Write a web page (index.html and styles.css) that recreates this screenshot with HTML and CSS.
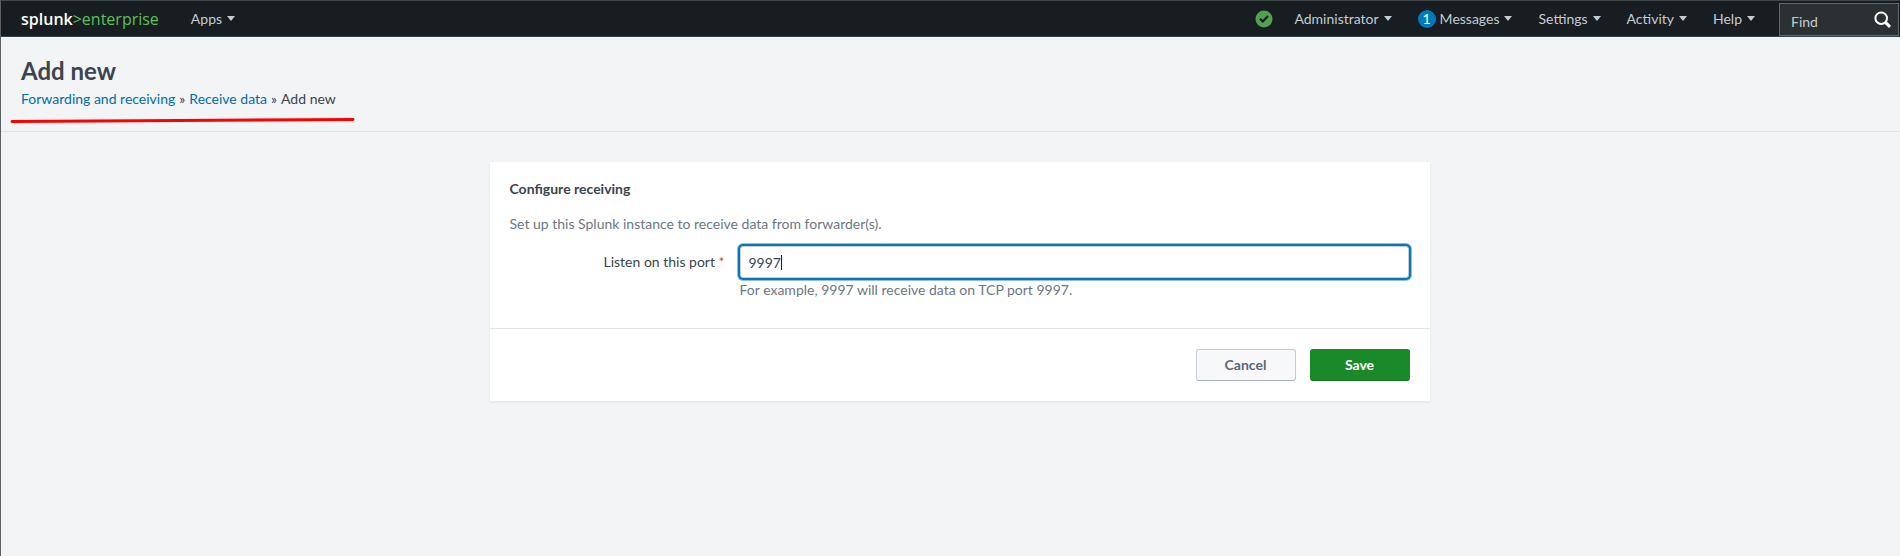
FILE: index.html
```html
<!DOCTYPE html>
<html lang="en">
<head>
<meta charset="utf-8">
<title>Add new</title>
<link rel="stylesheet" href="styles.css">
</head>
<body>
<header class="topbar">
  <a class="brand" href="#"><span class="brand-name">splunk</span><span class="brand-product">&gt;enterprise</span></a>
  <nav class="nav nav-main">
    <button class="nav-item" type="button">Apps<span class="arrow"></span></button>
  </nav>
  <nav class="nav nav-tools">
    <a class="health" href="#" aria-label="Health status">
      <svg width="18" height="18" viewBox="0 0 18 18"><circle cx="9" cy="9" r="8.5" fill="#53a051"/><path d="M5 8.8l2.8 2.6L13 6" fill="none" stroke="#171d21" stroke-width="2.2"/></svg>
    </a>
    <button class="nav-item" type="button">Administrator<span class="arrow"></span></button>
    <button class="nav-item" type="button"><span class="badge">1</span>Messages<span class="arrow"></span></button>
    <button class="nav-item" type="button">Settings<span class="arrow"></span></button>
    <button class="nav-item" type="button">Activity<span class="arrow"></span></button>
    <button class="nav-item" type="button">Help<span class="arrow"></span></button>
  </nav>
  <form class="find">
    <input class="find-input" type="text" placeholder="Find" aria-label="Find">
    <button class="find-button" type="button" aria-label="Search">
      <svg width="18" height="18" viewBox="0 0 18 18" fill="none" stroke="#fff"><circle cx="7.2" cy="7.2" r="5.8" stroke-width="2"/><path d="M11.4 11.4l4.6 4.4" stroke-width="3"/></svg>
    </button>
  </form>
</header>
<section class="page-head">
  <h1 class="title">Add new</h1>
  <div class="crumbs"><a href="#">Forwarding and receiving</a><span class="crumb-mark">»</span><a href="#">Receive data</a><span class="crumb-mark">»</span>Add new</div>
  <svg class="marker" width="348" height="8" viewBox="0 0 348 8"><path d="M3 5.5L170 4.5L344 3.5" fill="none" stroke="#fe0000" stroke-width="3" stroke-linecap="round"/></svg>
</section>
<main class="content">
  <form class="panel">
    <div class="panel-body">
      <h2 class="panel-title">Configure receiving</h2>
      <p class="panel-text">Set up this Splunk instance to receive data from forwarder(s).</p>
      <div class="field">
        <label class="field-label" for="port">Listen on this port <span class="required">*</span></label>
        <div class="field-control">
          <input class="field-input" id="port" type="text" value="9997">
          <span class="text-cursor"></span>
        </div>
        <p class="field-help">For example, 9997 will receive data on TCP port 9997.</p>
      </div>
    </div>
    <div class="panel-actions">
      <button class="button" type="button">Cancel</button>
      <button class="button button-primary" type="button">Save</button>
    </div>
  </form>
</main>
</body>
</html>
```
FILE: styles.css
```css
* { box-sizing: border-box; }
body {
  margin: 0;
  min-height: 100vh;
  border-left: 1px solid #5c6063;
  background: #f2f4f5;
  color: #3c444d;
  font: 14px/20px Lato, "Liberation Sans", sans-serif;
}
h1, h2, p { margin: 0; }
a { color: #006eaa; text-decoration: none; }
button, input { font: inherit; }
svg { display: block; }

.topbar {
  display: flex;
  height: 37px;
  background: #171d21;
  border-top: 1px solid #3f474b;
  border-bottom: 1px solid #34444f;
}
.brand {
  display: flex;
  align-items: center;
  padding-left: 20px;
  font: 16px/20px "Open Sans", sans-serif;
}
.brand-name { color: #fff; font-weight: 600; }
.brand-product { color: #5cc05c; }
.nav { display: flex; align-items: center; gap: 26px; }
.nav-main { margin-left: 32px; }
.nav-tools { margin-left: auto; margin-right: 24px; }
.nav-item {
  display: flex;
  align-items: center;
  padding: 0;
  border: 0;
  background: none;
  color: #c3cbd4;
}
.arrow {
  margin-left: 5px;
  border: 4px solid transparent;
  border-top: 5px solid #c3cbd4;
  border-bottom: 0;
}
.health { margin-right: -5px; }
.badge {
  width: 18px;
  height: 18px;
  margin-right: 4px;
  border-radius: 50%;
  background: #007abd;
  color: #fff;
  line-height: 18px;
  text-align: center;
}
.find {
  display: flex;
  align-items: center;
  width: 120px;
  margin: 2px 1px 0 0;
  border: 1px solid #5c6773;
  background: #2b3033;
}
.find-input {
  width: 80px;
  padding: 5px 0 0 11px;
  border: 0;
  outline: 0;
  background: none;
  color: #fff;
}
.find-input::placeholder { color: #c3cbd4; opacity: 1; }
.find-button { margin-left: auto; padding: 0 6px 0 0; border: 0; background: none; }

.page-head {
  position: relative;
  padding: 20px 20px 22px;
  border-bottom: 1px solid #e1e6eb;
}
.title { font-size: 24px; line-height: 28px; font-weight: 700; }
.crumbs { margin-top: 4px; }
.crumb-mark { margin: 0 4px; }
.marker { position: absolute; left: 8px; bottom: 7px; }

.content { padding: 30px 0 0 18px; }
.panel {
  max-width: 940px;
  margin: 0 auto;
  background: #fff;
  box-shadow: 0 1px 2px #dfe4e8;
}
.panel-body { padding: 17px 20px 28px; }
.panel-title { font-size: 14px; line-height: 20px; font-weight: 700; }
.panel-text { margin: 15px 0 12px; color: #6b7785; }
.field {
  display: grid;
  grid-template-columns: 215px 1fr;
  column-gap: 15px;
  align-items: center;
}
.field-label { text-align: right; }
.required { color: #dc4e41; }
.field-control { position: relative; padding-right: 1px; }
.field-input {
  display: block;
  width: 100%;
  height: 32px;
  padding: 0 8px;
  border: 1px solid #c3cbd4;
  border-radius: 3px;
  outline: 0;
  background: #fff;
  color: #3c444d;
  box-shadow: 0 0 0 2px #0877b3, 0 0 0 3px #8fc0dc;
}
.text-cursor {
  position: absolute;
  left: 41px;
  top: 9px;
  width: 1px;
  height: 15px;
  background: #222;
}
.field-help { grid-column: 2; margin-top: 2px; color: #6b7785; }
.panel-actions {
  display: flex;
  justify-content: flex-end;
  gap: 14px;
  padding: 20px;
  border-top: 1px solid #e1e6eb;
}
.button {
  width: 100px;
  height: 32px;
  padding: 0;
  border: 1px solid #c3cbd4;
  border-bottom-color: #a9b3bd;
  border-radius: 3px;
  background: #f7f8fa;
  color: #5c6773;
  font-weight: 700;
}
.button-primary {
  border-color: #1a8929;
  border-bottom-color: #157122;
  background: #1a8929;
  color: #fff;
}
```
